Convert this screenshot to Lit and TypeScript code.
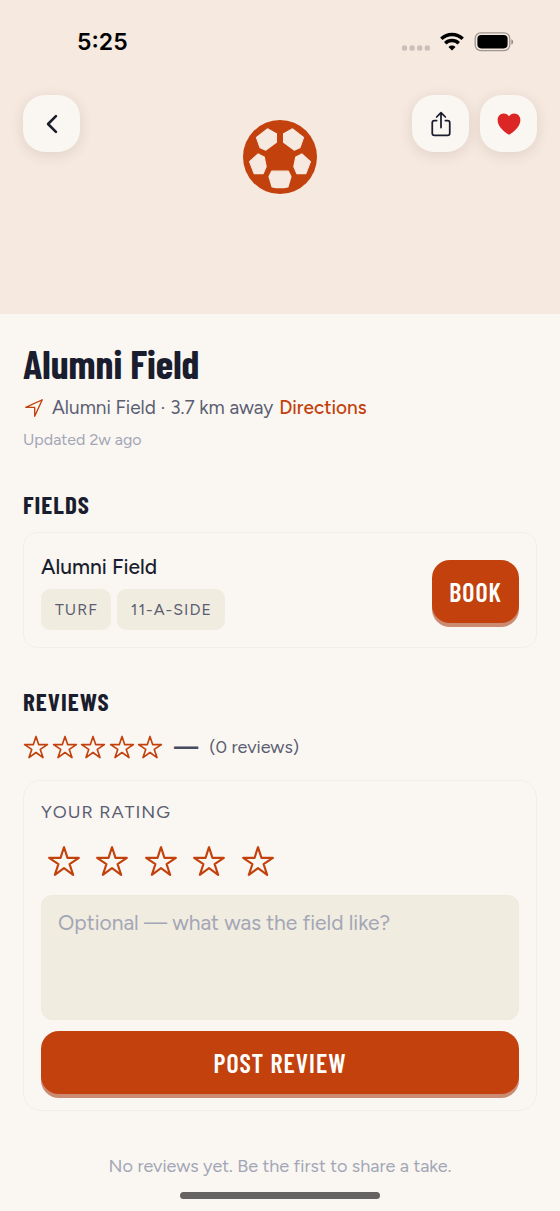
import { LitElement, html, svg, css } from "lit";
import { customElement, state } from "lit/decorators.js";

const STAR = "M480 208H308L256 48l-52 160H32l140 96-54 160 138-100 138 100-54-160z";

@customElement("rating-star")
class RatingStar extends LitElement {
  static styles = css`
    :host { display: block; width: 26px; height: 26px; flex: none; }
    .star { display: block; width: 100%; height: 100%; overflow: visible; }
    .shape { fill: none; stroke: #c2410c; stroke-width: 32; stroke-linejoin: round; }
    :host([filled]) .shape { fill: #c2410c; }
  `;
  render() {
    return html`<svg class="star" viewBox="0 0 512 512" aria-hidden="true"><path class="shape" d=${STAR} /></svg>`;
  }
}

@customElement("status-bar")
class StatusBar extends LitElement {
  static styles = css`
    :host { display: flex; align-items: center; justify-content: space-between; padding: 28px 46px 0 77px; }
    .time { font: 600 23px/28px Inter, sans-serif; color: #000; }
    .signals { display: flex; align-items: center; gap: 10px; }
    .icon { display: block; }
  `;
  render() {
    return html`
      <span class="time">5:25</span>
      <span class="signals">
        <svg class="icon" width="28" height="20" viewBox="0 0 28 20" aria-hidden="true">
          ${[0, 7.6, 15.2, 22.8].map((x) => svg`<rect x=${x} y="13.5" width="5" height="5" rx="1.2" fill="#cabeb8" />`)}
        </svg>
        <svg class="icon" width="24" height="20" viewBox="0 0 24 20" aria-hidden="true">
          <g fill="none" stroke="#000" stroke-width="3.4">
            <path d="M1.3 6.8a15.4 15.4 0 0 1 21.4 0" />
            <path d="M5.2 11.3a9.8 9.8 0 0 1 13.6 0" />
          </g>
          <path d="M12 18.6l-3.5-3.6a5 5 0 0 1 7 0z" />
        </svg>
        <svg class="icon" width="40" height="20" viewBox="0 0 40 20" aria-hidden="true">
          <rect x="1.2" y="0.9" width="34.6" height="17.8" rx="5.6" fill="none" stroke="#a0958f" stroke-width="1.3" />
          <rect x="3.4" y="3" width="30.2" height="13.4" rx="3.8" />
          <path d="M37.4 7.2c2.2.8 2.2 4.6 0 5.4z" fill="#8f857f" />
        </svg>
      </span>
    `;
  }
}

@customElement("app-root")
class AppRoot extends LitElement {
  @state() private rating = 0;
  @state() private liked = true;

  static styles = css`
    :host {
      display: block;
      min-height: 100vh;
      background: #faf7f2;
      color: #1a1d2e;
      font-family: Figtree, Lato, sans-serif;
    }
    * { box-sizing: border-box; }
    h1, h2, h3, p, ul { margin: 0; padding: 0; border: 0; }
    button, textarea, input { font: inherit; margin: 0; border: 0; }
    button { cursor: pointer; }
    .hero { display: grid; min-height: 314px; background: #f5e9e0; }
    .hero-top, .ball { grid-area: 1 / 1; }
    .hero-top { display: flex; flex-direction: column; gap: 39px; }
    .ball { place-self: center; display: block; width: 74px; height: 74px; }
    .toolbar { display: flex; gap: 11px; padding: 0 23px; }
    .spacer { flex: 1; }
    .round {
      display: grid;
      place-items: center;
      width: 57px;
      height: 57px;
      padding: 0;
      border-radius: 22px;
      background: #faf7f2;
      color: #1a1d2e;
      box-shadow: 0 3px 14px rgba(90, 40, 20, 0.12);
    }
    .glyph { display: block; width: 28px; height: 28px; fill: none; stroke: currentColor; stroke-width: 32; stroke-linecap: round; stroke-linejoin: round; }
    .bold { stroke-width: 48; }
    .heart { stroke: none; fill: #dc2626; }
    .content { padding: 25px 23px 12px; }
    h1, h2, .action { font-family: "Barlow Condensed", "Liberation Sans Narrow", "Open Sans", sans-serif; }
    h1 { font-size: 40px; line-height: 48px; font-weight: 700; }
    .place { display: flex; align-items: center; margin-top: 7px; font-size: 19px; line-height: 28px; color: #5b5e72; }
    .pin { width: 22px; height: 22px; margin-right: 7px; color: #c2410c; }
    .directions { margin-left: 6px; color: #c2410c; font-weight: 500; text-decoration: none; }
    .updated { margin-top: 7px; font-size: 16px; line-height: 22px; color: #a3a6b6; }
    h2 { margin-top: 37px; font-size: 25px; line-height: 32px; font-weight: 700; letter-spacing: 1px; }
    .card { border: 1px solid #f2efe8; border-radius: 18px; padding: 17px 17px 16px; }
    .field { display: flex; align-items: center; justify-content: space-between; margin-top: 12px; padding: 20px 17px 17px; border-radius: 14px; }
    h3 { font-size: 21px; line-height: 28px; font-weight: 500; }
    .tags { display: flex; gap: 6px; margin-top: 8px; list-style: none; }
    .tag { padding: 0 13px 0 14px; border-radius: 9px; background: #f0ece0; color: #5b5e72; font-size: 16px; line-height: 41px; letter-spacing: 1px; }
    .action {
      height: 63px;
      padding: 0 17px;
      border-radius: 18px;
      background: #c2410c;
      color: #fff;
      font-size: 26px;
      font-weight: 600;
      letter-spacing: 1px;
      box-shadow: 0 4px 0 #cb8b73;
    }
    .summary { display: flex; align-items: center; margin-top: 16px; font-size: 18px; line-height: 28px; color: #5b5e72; }
    .stars { display: flex; justify-content: space-between; width: 140px; }
    .average { margin: 0 11px; font-size: 22px; font-weight: 700; color: #484c60; }
    .review { display: flex; flex-direction: column; gap: 11px; margin-top: 19px; }
    .label { font-size: 18px; line-height: 28px; letter-spacing: 1px; color: #5b5e72; }
    .picker { display: flex; justify-content: space-between; width: 239px; height: 47px; }
    .choice { position: relative; display: grid; place-items: center; width: 45px; }
    .choice input { position: absolute; inset: 0; width: 100%; height: 100%; opacity: 0; cursor: pointer; }
    .large { width: 34px; height: 34px; }
    .note {
      display: block;
      width: 100%;
      height: 125px;
      padding: 13px 16px;
      border: 1px solid #edeade;
      border-radius: 11px;
      background: #f0ece0;
      color: #1a1d2e;
      font-size: 21px;
      line-height: 28px;
      resize: none;
    }
    .note::placeholder { color: #a3a6b6; opacity: 1; }
    .empty { margin-top: 41px; font-size: 18px; line-height: 28px; text-align: center; color: #a3a6b6; }
    .home { width: 200px; height: 7px; margin: 12px auto 0; border-radius: 4px; background: #646361; }
  `;

  render() {
    return html`
      <header class="hero">
        <svg class="ball" viewBox="38 45 224 224" aria-hidden="true">
          <circle cx="150" cy="157" r="112" fill="#c2410c" />
          <g fill="#f5e9e0" stroke="#f5e9e0" stroke-width="4" stroke-linejoin="round">
            <path d="M112 72L139 87V112L107 136L90 129L79 98Z" />
            <path d="M188 72L161 87V112L193 136L210 129L221 98Z" />
            <path d="M84 148L102 157L108 186L99 207H72L58 171Z" />
            <path d="M216 148L198 157L192 186L201 207H228L242 171Z" />
            <path d="M125 200H175L183 216L174 247Q150 252 126 247L117 216Z" />
          </g>
        </svg>
        <div class="hero-top">
          <status-bar></status-bar>
          <nav class="toolbar">
            <button class="round" type="button" aria-label="Back">
              <svg class="glyph bold" viewBox="0 0 512 512"><path d="M328 112L184 256l144 144" /></svg>
            </button>
            <span class="spacer"></span>
            <button class="round" type="button" aria-label="Share">
              <svg class="glyph" viewBox="0 0 512 512">
                <path d="M336 192h40a40 40 0 0 1 40 40v192a40 40 0 0 1-40 40H136a40 40 0 0 1-40-40V232a40 40 0 0 1 40-40h40M336 128l-80-80-80 80M256 321V48" />
              </svg>
            </button>
            <button class="round" type="button" aria-label="Favorite" aria-pressed=${this.liked} @click=${() => (this.liked = !this.liked)}>
              <svg class="glyph heart" viewBox="0 0 512 512">
                <path d="M256 448a32 32 0 0 1-18-5.57c-78.59-53.35-112.62-89.93-131.39-112.8-40-48.75-59.15-98.8-58.61-153C48.63 114.52 98.46 64 159.08 64c44.08 0 74.61 24.83 92.39 45.51a6 6 0 0 0 9.06 0C278.31 88.81 308.84 64 352.92 64c60.62 0 110.45 50.52 111.08 112.64.54 54.21-18.63 104.26-58.61 153-18.77 22.87-52.8 59.45-131.39 112.8A32 32 0 0 1 256 448z" />
              </svg>
            </button>
          </nav>
        </div>
      </header>
      <main class="content">
        <h1>Alumni Field</h1>
        <p class="place">
          <svg class="glyph pin" viewBox="0 0 512 512" aria-hidden="true"><path d="M448 64L64 240.14h200a8 8 0 0 1 8 8V448z" /></svg>
          <span>Alumni Field · 3.7 km away</span>
          <a class="directions" href="#directions">Directions</a>
        </p>
        <p class="updated">Updated 2w ago</p>

        <h2>FIELDS</h2>
        <section class="card field">
          <div>
            <h3>Alumni Field</h3>
            <ul class="tags">
              <li class="tag">TURF</li>
              <li class="tag">11-A-SIDE</li>
            </ul>
          </div>
          <button class="action" type="button">BOOK</button>
        </section>

        <h2>REVIEWS</h2>
        <div class="summary">
          <span class="stars">${[1, 2, 3, 4, 5].map(() => html`<rating-star></rating-star>`)}</span>
          <span class="average">—</span>
          <span>(0 reviews)</span>
        </div>
        <form class="card review" @submit=${(e: Event) => e.preventDefault()}>
          <span class="label" id="rating-label">YOUR RATING</span>
          <div class="picker" role="radiogroup" aria-labelledby="rating-label">
            ${[1, 2, 3, 4, 5].map(
              (n) => html`<label class="choice">
                <rating-star class="large" ?filled=${n <= this.rating}></rating-star>
                <input type="radio" name="rating" aria-label="${n} stars" value=${n} @change=${() => (this.rating = n)} />
              </label>`
            )}
          </div>
          <textarea class="note" aria-label="Review" placeholder="Optional — what was the field like?"></textarea>
          <button class="action" type="submit">POST REVIEW</button>
        </form>
        <p class="empty">No reviews yet. Be the first to share a take.</p>
        <div class="home"></div>
      </main>
    `;
  }
}
